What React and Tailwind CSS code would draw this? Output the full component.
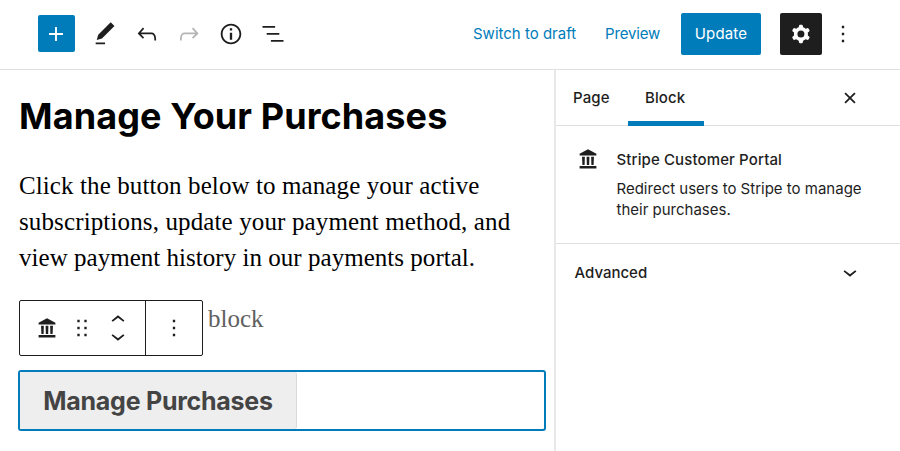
import React from "react";

const ICONS = {
  plus: "M18 11.2h-5.2V6h-1.6v5.2H6v1.6h5.2V18h1.6v-5.2H18z",
  edit: "M20.1 5.1L16.9 2 6.2 12.7l-1.3 4.4 4.5-1.3L20.1 5.1zM4 20.8h8v-1.5H4v1.5z",
  undo: "M18.3 11.7c-.6-.6-1.4-.9-2.3-.9H6.7l2.9-3.3-1.1-1-4.5 5L8.5 16l1-1-2.7-2.7H16c.5 0 .9.2 1.3.5 1 1 1 3.4 1 4.5v.3h1.5v-.2c0-1.5 0-4.3-1.5-5.7z",
  redo: "M15.6 6.5l-1.1 1 2.9 3.3H8c-.9 0-1.7.3-2.3.9-1.4 1.5-1.4 4.2-1.4 5.6v.2h1.5v-.3c0-1.1 0-3.5 1-4.5.3-.3.7-.5 1.3-.5h9.2L14.5 15l1.1 1.1 4.6-4.6-4.6-5z",
  info: "M12 3.2c-4.8 0-8.8 3.9-8.8 8.8 0 4.8 3.9 8.8 8.8 8.8 4.8 0 8.8-3.9 8.8-8.8 0-4.8-4-8.8-8.8-8.8zm0 16c-4 0-7.2-3.3-7.2-7.2C4.8 8 8 4.8 12 4.8s7.2 3.3 7.2 7.2c0 4-3.2 7.2-7.2 7.2zM11 17h2v-6h-2v6zm0-8h2V7h-2v2z",
  list: "M13.8 5.2H3v1.5h10.8V5.2zm-3.6 12v1.5H21v-1.5H10.2zm7.2-6H6.6v1.5h10.8v-1.5z",
  cog: "M10.289 4.836A1 1 0 0111.275 4h1.306a1 1 0 01.987.836l.244 1.466c.787.26 1.503.679 2.108 1.218l1.393-.522a1 1 0 011.216.437l.653 1.13a1 1 0 01-.23 1.273l-1.148.944a6.025 6.025 0 010 2.435l1.149.946a1 1 0 01.23 1.272l-.653 1.13a1 1 0 01-1.216.437l-1.394-.522c-.605.54-1.32.958-2.108 1.218l-.244 1.466a1 1 0 01-.987.836h-1.306a1 1 0 01-.986-.836l-.244-1.466a5.995 5.995 0 01-2.108-1.218l-1.394.522a1 1 0 01-1.217-.436l-.653-1.131a1 1 0 01.23-1.272l1.149-.946a6.026 6.026 0 010-2.435l-1.148-.944a1 1 0 01-.23-1.272l.653-1.131a1 1 0 011.217-.437l1.393.522a5.994 5.994 0 012.108-1.218l.244-1.466zM14.929 12a3 3 0 11-6 0 3 3 0 016 0z",
  more: "M13 19h-2v-2h2v2zm0-6h-2v-2h2v2zm0-6h-2V5h2v2z",
  close: "M12 13.06l3.712 3.713 1.061-1.06L13.061 12l3.712-3.712-1.06-1.06L12 10.938 8.288 7.227l-1.061 1.06L10.939 12l-3.712 3.712 1.06 1.061L12 13.061z",
  down: "M17.5 11.6L12 16l-5.5-4.4.9-1.2L12 14l4.5-3.6 1 1.2z",
  up: "M6.5 12.4L12 8l5.5 4.4-.9 1.2L12 10l-4.5 3.6-1-1.2z",
  drag: "M8 7h2V5H8v2zm0 6h2v-2H8v2zm0 6h2v-2H8v2zm6-14v2h2V5h-2zm0 8h2v-2h-2v2zm0 6h2v-2h-2v2z",
  bank: "M12 3.6L4.8 7.4V9h14.4V7.4zM6.9 10l.3 7.2h1.9L9.3 10zM10.8 10l.2 7.2h2l.2-7.2zM14.7 10l.2 7.2h1.9l.3-7.2zM4.8 18.1h14.4v2.1H4.8z",
};

function Icon({ name, className = "" }) {
  return (
    <svg viewBox="0 0 24 24" fill="currentColor" fillRule="evenodd" className={`size-7 shrink-0 ${className}`}>
      <path d={ICONS[name]} />
    </svg>
  );
}

function ToolButton({ name, className = "" }) {
  return (
    <button className={`flex size-[42px] shrink-0 items-center justify-center ${className}`}>
      <Icon name={name} />
    </button>
  );
}

function Header() {
  return (
    <header className="flex h-[70px] shrink-0 items-center justify-between border-b border-[#e0e0e0] pb-[2px] pl-[37.5px] pr-[36.5px] text-[15px]">
      <div className="flex items-center">
        <button className="mr-[9.5px] flex size-[37px] items-center justify-center rounded-[2px] bg-[#007cba] text-white">
          <Icon name="plus" />
        </button>
        <ToolButton name="edit" />
        <ToolButton name="undo" />
        <ToolButton name="redo" className="text-[#b5b5b5]" />
        <ToolButton name="info" />
        <ToolButton name="list" />
      </div>
      <div className="flex items-center">
        <button className="mr-[28px] w-[104px] whitespace-nowrap pt-[2px] text-left text-[#007cba]">Switch to draft</button>
        <button className="mr-[20px] w-[56px] whitespace-nowrap pt-[2px] text-left tracking-[-0.01em] text-[#007cba]">Preview</button>
        <button className="mr-[18.5px] h-[42px] w-[80px] rounded-[2px] bg-[#007cba] pt-[2px] tracking-[0.01em] text-white">Update</button>
        <ToolButton name="cog" className="rounded-[2px] bg-[#1e1e1e] text-white" />
        <ToolButton name="more" />
      </div>
    </header>
  );
}

function BlockToolbar() {
  return (
    <div className="ml-px flex h-[56px] w-[184px] items-stretch rounded-[2px] border border-[#1e1e1e] bg-white">
      <div className="flex w-[126px] items-center border-r border-[#1e1e1e] pl-[13px]">
        <Icon name="bank" />
        <Icon name="drag" className="ml-[7px]" />
        <div className="ml-[8px] flex flex-col items-center">
          <Icon name="up" className="-mb-[12px]" />
          <Icon name="down" />
        </div>
      </div>
      <div className="flex flex-1 items-center justify-center">
        <Icon name="more" />
      </div>
    </div>
  );
}

function Editor() {
  return (
    <main className="flex w-[554px] shrink-0 flex-col pl-[18px] pt-[22px]">
      <h1 className="ml-px whitespace-nowrap text-[36px] font-bold leading-[48px] tracking-[0.1px] text-black">Manage Your Purchases</h1>
      <div className="ml-px mt-[28px] whitespace-nowrap font-['Liberation_Serif',serif] text-[25px] leading-[36px] text-black">
        <p className="tracking-[0.1px]">Click the button below to manage your active</p>
        <p className="tracking-[0.13px]">subscriptions, update your payment method, and</p>
        <p className="tracking-[0.03px]">view payment history in our payments portal.</p>
      </div>
      <div className="mt-[24px] flex">
        <BlockToolbar />
        <span className="ml-[5px] pt-px font-['Liberation_Serif',serif] text-[25px] leading-[36px] text-[#606060]">block</span>
      </div>
      <div className="mt-[14px] flex h-[61px] w-[528px] rounded-[3px] border-2 border-[#007cba]">
        <button className="w-[277px] whitespace-nowrap rounded-r-[3px] border-r border-[#d9d9d9] bg-[#eeeeee] pt-[2px] text-[25px] font-bold tracking-[-0.25px] text-[#444444]">
          Manage Purchases
        </button>
      </div>
    </main>
  );
}

function Sidebar() {
  return (
    <aside className="flex min-w-0 flex-1 flex-col border-l-2 border-[#e8e8e8] text-[15px]">
      <div className="flex h-[56px] items-stretch border-b border-[#e0e0e0] font-medium">
        <button className="ml-[17px] mr-[17.5px] w-[37px] pt-[2px] text-left tracking-[0.1px]">Page</button>
        <button className="-mb-px w-[76px] border-b-[5px] border-[#007cba] pl-[17.5px] pt-[6px] text-left tracking-[0.1px]">Block</button>
        <div className="ml-auto mr-[36.5px] flex items-center">
          <Icon name="close" />
        </div>
      </div>
      <section className="flex h-[118px] border-b border-[#e0e0e0] pl-[18px] pt-[19px]">
        <Icon name="bank" />
        <div className="ml-[14.5px] whitespace-nowrap">
          <h2 className="pt-px font-medium leading-[28px] tracking-[0.12px]">Stripe Customer Portal</h2>
          <p className="mt-[4px] leading-[21px]">
            Redirect users to Stripe to manage
            <br />
            their purchases.
          </p>
        </div>
      </section>
      <button className="flex h-[56px] items-center justify-between pl-[18.5px] pr-[36.5px] font-medium">
        <span className="pt-[2px]">Advanced</span>
        <Icon name="down" />
      </button>
    </aside>
  );
}

export default function App() {
  return (
    <div className="flex h-[451px] w-[900px] flex-col overflow-hidden bg-white font-['Inter',sans-serif] text-[#1e1e1e]">
      <Header />
      <div className="flex min-h-0 flex-1">
        <Editor />
        <Sidebar />
      </div>
    </div>
  );
}
